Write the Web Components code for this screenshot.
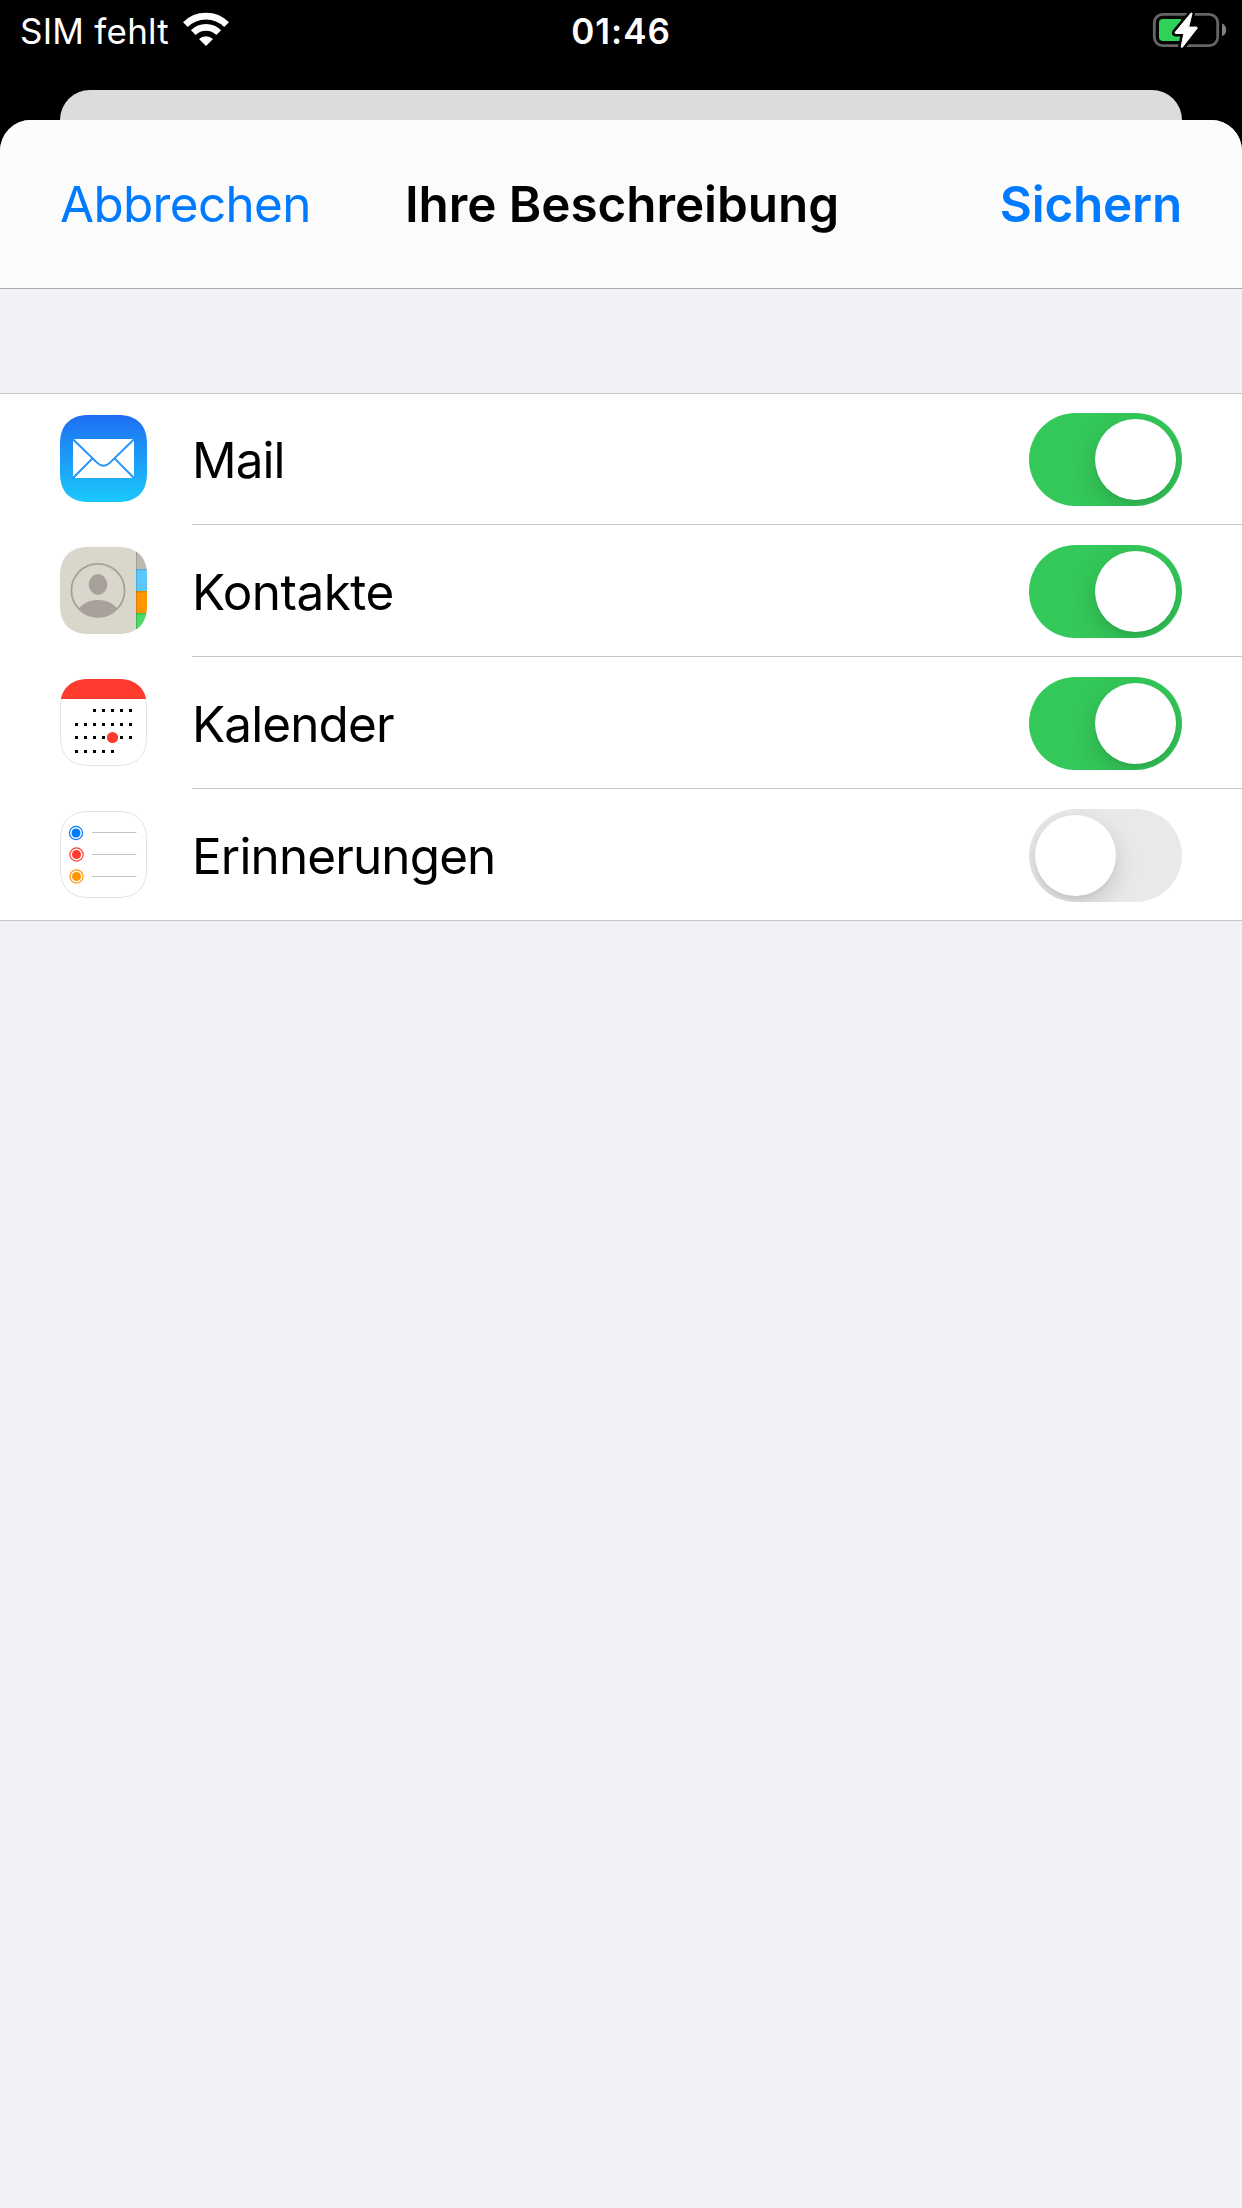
<!DOCTYPE html>
<html lang="de">
<head>
<meta charset="utf-8">
<title>Ihre Beschreibung</title>
<style>
html,body{margin:0;background:#000}
body{width:1242px;height:2208px;overflow:hidden;font-family:Inter,"Liberation Sans",sans-serif}
</style>
</head>
<body>
<account-screen></account-screen>
<script>
const define = (name, html, setup) => {
  const template = document.createElement('template');
  template.innerHTML = html;
  customElements.define(name, class extends HTMLElement {
    constructor() {
      super();
      this.attachShadow({ mode: 'open' }).append(template.content.cloneNode(true));
    }
    connectedCallback() { if (setup) setup(this, this.shadowRoot); }
  });
};

define('status-bar', `
<style>
:host{display:grid;grid-template-columns:1fr auto 1fr;height:90px;color:#fff;font-size:35px;line-height:62px;white-space:nowrap}
.left{display:flex;align-items:flex-start;padding-left:20px;gap:13px}
.sim{letter-spacing:.25px;width:150px}
.time{font-weight:600;letter-spacing:1px}
.right{display:flex;justify-content:flex-end;align-items:flex-start;padding-right:14px}
svg{display:block;flex:none}
</style>
<div class="left"><span class="sim">SIM fehlt</span>
<svg width="46" height="62" viewBox="183 0 46 62" fill="none" stroke="#fff" stroke-width="6.7">
<path d="M185.4 24.7A29.2 29.2 0 0 1 226.6 24.7M193.3 32.6A18 18 0 0 1 218.7 32.6"/>
<path d="M206 46L199 39A10.3 10.3 0 0 1 213 39Z" fill="#fff" stroke="none"/>
</svg></div>
<span class="time">01:46</span>
<div class="right"><svg width="76" height="62" viewBox="1152 0 76 62">
<rect x="1154.3" y="14.3" width="63.4" height="31.4" rx="8.5" fill="none" stroke="#666" stroke-width="2.8"/>
<path d="M1222 23.5A7 7 0 0 1 1222 36.3Z" fill="#808080"/>
<rect x="1159" y="19" width="26" height="22" rx="4" fill="#30d158"/>
<path d="M1181 18H1188V42H1181Z"/>
<path d="M1190.8 13.3L1175 32.4Q1174.8 33.3 1175.7 33.5H1183.8L1181.2 46.8Q1181.5 47.8 1182.4 47.2L1197.2 28.2Q1197.4 27.3 1196.5 27.1H1188.7L1192 13.5Q1191.8 12.4 1190.8 13.3Z" fill="#000" stroke="#000" stroke-width="6" stroke-linejoin="round"/>
<path d="M1190.8 13.3L1175 32.4Q1174.8 33.3 1175.7 33.5H1183.8L1181.2 46.8Q1181.5 47.8 1182.4 47.2L1197.2 28.2Q1197.4 27.3 1196.5 27.1H1188.7L1192 13.5Q1191.8 12.4 1190.8 13.3Z" fill="#fff" stroke="#fff" stroke-width="1" stroke-linejoin="round"/>
</svg></div>`);

define('nav-header', `
<style>
:host{display:grid;grid-template-columns:1fr auto 1fr;height:168px;padding:0 60px;line-height:168px;font-size:49.4px;white-space:nowrap;background:linear-gradient(90deg,#fdfdff,#fbfbfb 60px,#fbfbfb 1100px,#fcfcfe);border-bottom:1px solid #a9a9ae}
.cancel{color:#007aff;letter-spacing:-.65px}
.title{font-weight:600;padding-left:2px;letter-spacing:-.05px}
.save{color:#007aff;font-weight:600;letter-spacing:-.2px;text-align:right}
</style>
<span class="cancel"><slot name="cancel"></slot></span>
<span class="title"><slot></slot></span>
<span class="save"><slot name="save"></slot></span>`);

define('toggle-switch', `
<style>
:host{display:flex;box-sizing:border-box;flex:none;width:153px;height:93px;padding:6px;border-radius:47px;background:#e9e9eb;overflow:hidden}
:host([on]){background:#34c759;justify-content:flex-end}
i{width:81px;height:81px;border-radius:50%;background:#fff;box-shadow:0 9px 24px rgba(0,0,0,.15),0 3px 3px rgba(0,0,0,.04)}
</style><i></i>`);

const calendarDots = [[34.5,31.5,5],[16.5,45.5,7],[16.5,58.5,7],[16.5,72.5,5]]
  .map(([x, y, n]) => Array.from({ length: n }, (_, i) => `<rect x="${x - 1.5 + i * 9}" y="${y - 1.5}" width="3" height="3"/>`).join('')).join('');
const shape = 'M29 0H58C77 0 87 10 87 29V58C87 77 77 87 58 87H29C10 87 0 77 0 58V29C0 10 10 0 29 0Z';
const outline = '<path d="M29 .5H58C76.7 .5 86.5 10.3 86.5 29V58C86.5 76.7 76.7 86.5 58 86.5H29C10.3 86.5 .5 76.7 .5 58V29C.5 10.3 10.3 .5 29 .5Z" fill="none" stroke="#e2e2e4"/>';
const icons = {
  mail: `<path d="${shape}" fill="url(#g)"/><rect x="13" y="24" width="61" height="39" fill="#fff"/>
    <path d="M13 24.2L37 47.6Q43.5 53.8 50 47.6L74 24.2M13 63L32.2 43.6M74 63L54.8 43.6" fill="none" stroke="#2494f6" stroke-width="2"/>`,
  contacts: `<g clip-path="url(#s)"><rect width="87" height="87" fill="#d9d6cc"/>
    <rect x="76" width="11" height="22" fill="#bdb9b0"/><rect x="76" y="22" width="11" height="22" fill="#5ac8fa"/><rect x="76" y="44" width="11" height="22" fill="#ff9500"/><rect x="76" y="66" width="11" height="21" fill="#4cd964"/>
    <path d="M76 22h11v1.5H76zM76 44h11v1.5H76zM76 66h11v1.5H76z" fill="#000" fill-opacity=".12"/><rect x="76" width="1" height="87" fill="#000" fill-opacity=".14"/></g>
    <ellipse cx="38" cy="37.5" rx="9.3" ry="10.4" fill="#a8a09a"/><ellipse cx="38" cy="70" rx="22" ry="17" fill="#a8a09a" clip-path="url(#c)"/>
    <circle cx="38" cy="43.4" r="26.6" fill="none" stroke="#a8a09a" stroke-width="1.8"/>`,
  calendar: `<path d="${shape}" fill="#fff"/>${outline}<rect width="87" height="20" fill="#ff3b30" clip-path="url(#s)"/>
    ${calendarDots}<circle cx="52.5" cy="58.5" r="5.6" fill="#ff3b30"/>`,
  reminders: `<path d="${shape}" fill="#fff"/>${outline}` + [['#007aff',22,16],['#ff3b30',43.5,16.5],['#ff9500',65.5,16.5]].map(([c, y, x]) =>
    `<circle cx="${x}" cy="${y}" r="6.6" fill="none" stroke="${c}" stroke-width="1.2"/><circle cx="${x}" cy="${y}" r="4.5" fill="${c}"/>`).join('') +
    '<path d="M32 21.5H76.5M32 43.5H76.5M32 65.5H76.5" stroke="#c4c4c6"/>'
};

define('service-icon', `
<style>:host{display:block;flex:none;width:87px;height:87px}svg{display:block}</style>
<div></div>`, (el, root) => {
  root.querySelector('div').innerHTML = `<svg width="87" height="87" viewBox="0 0 87 87"><defs>
    <linearGradient id="g" x1="0" y1="0" x2="0" y2="1"><stop stop-color="#1e6ff2"/><stop offset="1" stop-color="#1ac8fc"/></linearGradient>
    <clipPath id="s"><path d="${shape}"/></clipPath><clipPath id="c"><circle cx="38" cy="43.4" r="26.6"/></clipPath></defs>${icons[el.getAttribute('name')]}</svg>`;
});

define('service-row', `
<style>
:host{display:flex;box-sizing:border-box;height:132px;padding-left:60px;align-items:flex-start}
service-icon{margin-top:22px}
.body{flex:1;display:flex;box-sizing:border-box;height:132px;margin-left:45px;padding-right:60px;justify-content:space-between;border-bottom:1px solid #c6c6c8}
:host([last]) .body{border-bottom-color:transparent}
.label{font-size:49.4px;line-height:134px;letter-spacing:var(--tracking,-.7px)}
toggle-switch{margin-top:20px}
</style>
<div class="body"><span class="label"><slot></slot></span><toggle-switch></toggle-switch></div>`, (el, root) => {
  const icon = document.createElement('service-icon');
  icon.setAttribute('name', el.getAttribute('icon'));
  root.querySelector('.body').before(icon);
  root.querySelector('toggle-switch').toggleAttribute('on', el.hasAttribute('on'));
});

define('service-group', `
<style>:host{display:block;margin-top:104px;background:#fff;box-shadow:inset 0 1px #c6c6c8,inset 0 -1px #c6c6c8}</style><slot></slot>`);

define('modal-sheet', `
<style>
:host{display:flex;flex-direction:column;flex:1}
.back{height:30px;margin:0 60px;background:#dcdcdd;border-radius:30px 30px 0 0}
.sheet{flex:1;background:#f2f1f7;border-radius:31px 31px 0 0;overflow:hidden}
</style>
<div class="back"></div><div class="sheet"><slot></slot></div>`);

define('account-screen', `
<style>:host{display:flex;flex-direction:column;width:1242px;height:2208px;background:#000;color:#000}</style>
<status-bar></status-bar>
<modal-sheet>
<nav-header><span slot="cancel">Abbrechen</span>Ihre Beschreibung<span slot="save">Sichern</span></nav-header>
<service-group>
<service-row icon="mail" on style="--tracking:-.9px">Mail</service-row>
<service-row icon="contacts" on style="--tracking:-.5px">Kontakte</service-row>
<service-row icon="calendar" on style="--tracking:-.85px">Kalender</service-row>
<service-row icon="reminders" last style="--tracking:-.83px">Erinnerungen</service-row>
</service-group>
</modal-sheet>`);
</script>
</body>
</html>
